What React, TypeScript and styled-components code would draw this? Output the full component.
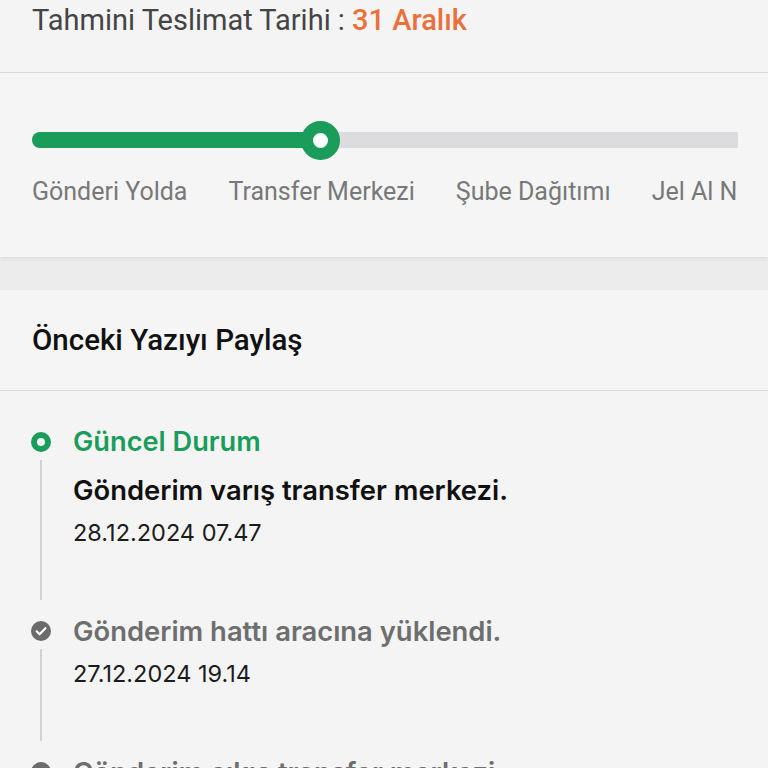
import styled, { createGlobalStyle } from "styled-components";

const GlobalStyle = createGlobalStyle`
  html, body {
    margin: 0;
    padding: 0;
    background: #f4f4f4;
    overflow: hidden;
  }
  * {
    box-sizing: border-box;
  }
`;

const Page = styled.div`
  width: 768px;
  height: 768px;
  overflow: hidden;
  background: #f4f4f4;
`;

const Header = styled.div`
  height: 73px;
  padding: 3px 32px 0;
  border-bottom: 1px solid #dcdcdc;
  font-family: Roboto, "Liberation Sans", sans-serif;
  font-size: 29px;
  line-height: 34px;
  color: #444444;
  white-space: nowrap;
`;

const Highlight = styled.span`
  color: #e8713c;
  font-weight: 500;
`;

const ProgressCard = styled.section`
  height: 184px;
  padding: 59px 30px 0 32px;
  background: #f5f5f5;
  box-shadow: 0 2px 4px rgba(0, 0, 0, 0.06);
  position: relative;
  z-index: 1;
`;

const Track = styled.div`
  position: relative;
  height: 16px;
  background: #dcdcdf;
  border-radius: 8px 0 0 8px;
`;

const Fill = styled.div<{ $width: number }>`
  height: 100%;
  width: ${({ $width }) => $width}px;
  background: #1a9c5b;
  border-radius: 8px 0 0 8px;
`;

const Knob = styled.div<{ $left: number }>`
  position: absolute;
  top: 50%;
  left: ${({ $left }) => $left}px;
  width: 39px;
  height: 39px;
  margin: -19.5px 0 0 -19.5px;
  border-radius: 50%;
  background: #ffffff;
  border: 12px solid #1a9c5b;
`;

const Steps = styled.div`
  display: flex;
  gap: 41px;
  margin-top: 28px;
  overflow: hidden;
  white-space: nowrap;
  font-family: Roboto, "Liberation Sans", sans-serif;
  font-size: 25px;
  line-height: 32px;
  color: #787878;
`;

const Gap = styled.div`
  height: 33px;
  background: #ececec;
`;

const ShareRow = styled.div`
  height: 101px;
  padding: 0 32px;
  display: flex;
  align-items: center;
  border-bottom: 1px solid #dcdcdc;
  background: #f5f5f5;
  font-family: Roboto, "Liberation Sans", sans-serif;
  font-size: 29.5px;
  font-weight: 500;
  color: #111111;
`;

const Timeline = styled.div`
  padding: 33px 32px 0 31px;
  font-family: Inter, "Noto Sans", sans-serif;
  white-space: nowrap;
`;

const Item = styled.div`
  display: grid;
  grid-template-columns: 20px 1fr;
  column-gap: 22px;
`;

const Rail = styled.div`
  display: flex;
  flex-direction: column;
  align-items: center;
  padding-top: 8px;
`;

const Line = styled.div`
  flex: 1;
  width: 2px;
  margin: 8px 0 13px;
  background: #d2d2d2;
`;

const Body = styled.div`
  padding-bottom: 64px;
`;

const Status = styled.div`
  font-size: 27.2px;
  font-weight: 600;
  line-height: 36px;
  color: #1a9c5b;
  margin-bottom: 12px;
`;

const Title = styled.div<{ $muted?: boolean }>`
  font-size: 27.4px;
  font-weight: 600;
  line-height: 36px;
  color: ${({ $muted }) => ($muted ? "#6e6e6e" : "#111111")};
`;

const Date = styled.div`
  margin-top: 9px;
  font-size: 23.5px;
  line-height: 32px;
  color: #1c1c1c;
`;

function CurrentIcon() {
  return (
    <svg width="20" height="20" viewBox="0 0 20 20">
      <circle cx="10" cy="10" r="7" fill="none" stroke="#1a9c5b" strokeWidth="6" />
    </svg>
  );
}

function DoneIcon() {
  return (
    <svg width="20" height="20" viewBox="0 0 20 20">
      <circle cx="10" cy="10" r="10" fill="#6b6b6b" />
      <path d="M5.6 10.3l3 3 5.8-6.1" fill="none" stroke="#ffffff" strokeWidth="2.2" strokeLinecap="round" strokeLinejoin="round" />
    </svg>
  );
}

const steps = ["Gönderi Yolda", "Transfer Merkezi", "Şube Dağıtımı", "Jel Al Noktası"];

const events = [
  { title: "Gönderim varış transfer merkezi.", date: "28.12.2024 07.47", current: true },
  { title: "Gönderim hattı aracına yüklendi.", date: "27.12.2024 19.14" },
  { title: "Gönderim çıkış transfer merkezi.", date: "27.12.2024 17.02" },
];

export default function App() {
  return (
    <Page>
      <GlobalStyle />
      <Header>
        Tahmini Teslimat Tarihi : <Highlight>31 Aralık</Highlight>
      </Header>
      <ProgressCard>
        <Track>
          <Fill $width={288} />
          <Knob $left={288} />
        </Track>
        <Steps>
          {steps.map((s) => (
            <span key={s}>{s}</span>
          ))}
        </Steps>
      </ProgressCard>
      <Gap />
      <ShareRow>Önceki Yazıyı Paylaş</ShareRow>
      <Timeline>
        {events.map((e) => (
          <Item key={e.date}>
            <Rail>
              {e.current ? <CurrentIcon /> : <DoneIcon />}
              <Line />
            </Rail>
            <Body>
              {e.current && <Status>Güncel Durum</Status>}
              <Title $muted={!e.current}>{e.title}</Title>
              <Date>{e.date}</Date>
            </Body>
          </Item>
        ))}
      </Timeline>
    </Page>
  );
}
